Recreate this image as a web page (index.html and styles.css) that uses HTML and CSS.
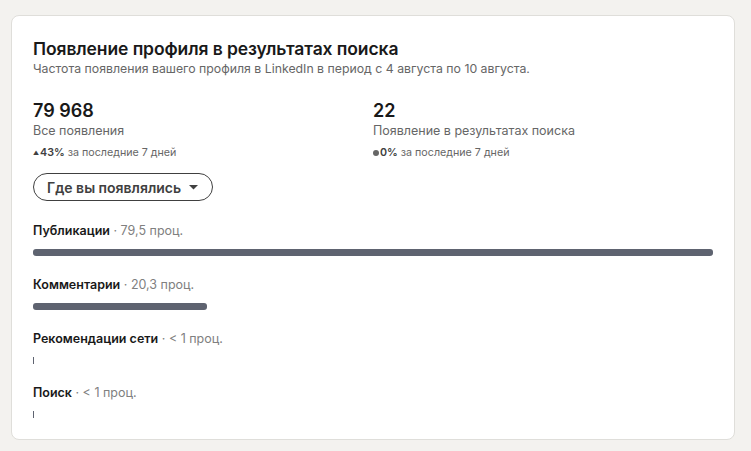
FILE: index.html
```html
<!DOCTYPE html>
<html lang="ru">
<head>
  <meta charset="UTF-8">
  <meta name="viewport" content="width=device-width, initial-scale=1.0">
  <title>Появление профиля в результатах поиска</title>
  <link rel="stylesheet" href="styles.css">
</head>
<body>
  <section class="card">
    <header class="card-head">
      <h2 class="card-title">Появление профиля в результатах поиска</h2>
      <p class="card-sub">Частота появления вашего профиля в LinkedIn в период с 4 августа по 10 августа.</p>
    </header>

    <div class="stats">
      <div class="stat">
        <div class="stat-value">79 968</div>
        <div class="stat-label">Все появления</div>
        <div class="stat-trend">
          <span class="trend-up">&#9650;</span><b>43%</b> за последние 7 дней
        </div>
      </div>
      <div class="stat">
        <div class="stat-value">22</div>
        <div class="stat-label">Появление в результатах поиска</div>
        <div class="stat-trend">
          <span class="trend-flat"></span><b>0%</b> за последние 7 дней
        </div>
      </div>
    </div>

    <button class="filter-btn">
      Где вы появлялись
      <svg class="caret" width="9" height="5" viewBox="0 0 9 5"><path d="M0 0h9L4.5 4.5z" fill="currentColor"/></svg>
    </button>

    <ul class="sources">
      <li class="source">
        <div class="source-name"><b>Публикации</b> · 79,5 проц.</div>
        <div class="bar"><div class="bar-fill" style="width: 100%"></div></div>
      </li>
      <li class="source">
        <div class="source-name"><b>Комментарии</b> · 20,3 проц.</div>
        <div class="bar"><div class="bar-fill" style="width: 25.6%"></div></div>
      </li>
      <li class="source">
        <div class="source-name"><b>Рекомендации сети</b> · &lt; 1 проц.</div>
        <div class="bar"><div class="bar-tick"></div></div>
      </li>
      <li class="source">
        <div class="source-name"><b>Поиск</b> · &lt; 1 проц.</div>
        <div class="bar"><div class="bar-tick"></div></div>
      </li>
    </ul>
  </section>
</body>
</html>
```

FILE: styles.css
```css
* {
  margin: 0;
  padding: 0;
  box-sizing: border-box;
}

body {
  font-family: Inter, "Noto Sans", sans-serif;
  background-color: #f3f2ef;
  color: #191919;
  padding: 15px 16px 13px 11px;
}

.card {
  background-color: #fff;
  border: 1px solid #dfdeda;
  border-radius: 8px;
  padding: 21px 21px 21px 21px;
}

.card-title {
  font-size: 17.5px;
  font-weight: 600;
  line-height: 24px;
  letter-spacing: -0.1px;
}

.card-sub {
  font-size: 12.3px;
  line-height: 15px;
  color: #666;
}

.stats {
  display: grid;
  grid-template-columns: 340px 1fr;
  margin-top: 23px;
}

.stat-value {
  font-size: 18px;
  font-weight: 600;
  line-height: 24px;
}

.stat-label {
  font-size: 12.5px;
  line-height: 18px;
  color: #666;
  margin-top: -1px;
}

.stat-trend {
  font-size: 10.7px;
  line-height: 14px;
  color: #666;
  margin-top: 6px;
  display: flex;
  align-items: center;
}

.stat-trend b {
  font-weight: 600;
  color: #404040;
  margin-right: 3px;
}

.trend-up {
  font-size: 6px;
  color: #404040;
  margin-right: 1px;
}

.trend-flat {
  width: 6px;
  height: 6px;
  border-radius: 50%;
  background-color: #666;
  margin-right: 1px;
}

.filter-btn {
  display: inline-flex;
  align-items: center;
  gap: 8px;
  margin-top: 13px;
  height: 28px;
  padding: 0 14px 0 13px;
  border: 1px solid #404040;
  border-radius: 14px;
  background-color: #fff;
  color: #404040;
  font-family: inherit;
  font-size: 14px;
  font-weight: 600;
}

.sources {
  list-style: none;
  margin-top: 22px;
}

.source + .source {
  margin-top: 21px;
}

.source-name {
  font-size: 12.5px;
  line-height: 16px;
  color: #808080;
}

.source-name b {
  font-weight: 600;
  color: #191919;
}

.bar {
  margin-top: 10px;
  height: 7px;
}

.bar-fill {
  height: 100%;
  background-color: #5e6370;
  border-radius: 3px;
}

.bar-tick {
  width: 1px;
  height: 100%;
  background-color: #5e6370;
}
```
